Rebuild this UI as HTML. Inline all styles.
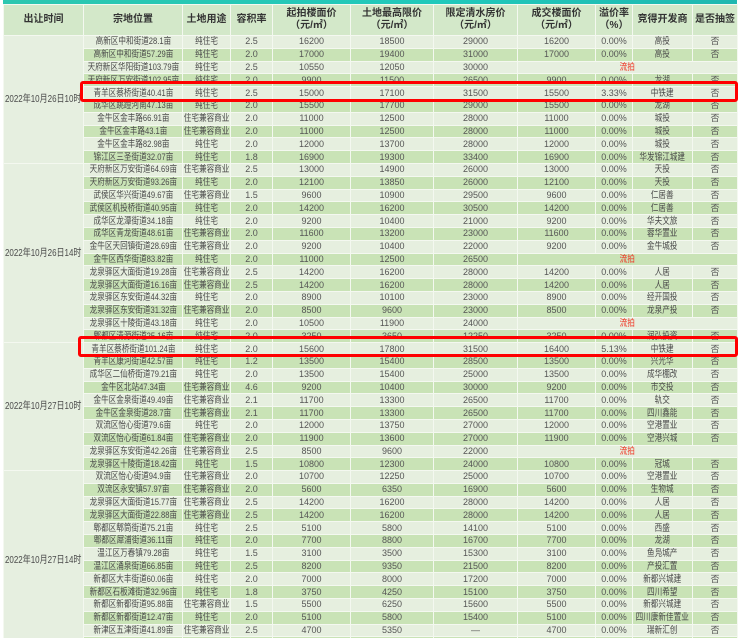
<!DOCTYPE html>
<html><head><meta charset="utf-8"><style>
html,body{margin:0;padding:0;background:#fff;width:740px;height:638px;overflow:hidden;position:relative}
.top{position:absolute;left:3px;top:0;width:734px;height:4px;background:linear-gradient(90deg,#2cc7b0,#20c9bb 60%,#1fb8b0)}
table{position:absolute;left:3px;top:4px;border-collapse:collapse;table-layout:fixed;width:734px;font-family:"Liberation Sans","Noto Sans CJK SC",sans-serif;color:#555;font-size:9px}
td,th{border:1px solid #f4f8f0;text-align:center;padding:0;white-space:nowrap;overflow:hidden;line-height:11px}
th{background:#d3e8c9;color:#333;font-weight:bold;font-size:10px;height:30px;line-height:12px}
tr.r{height:12.8px}
tr.l td{background:#e6efdf}
tr.d td{background:#c9e3b6}
td.dt{background:#e6efe0 !important;color:#444;font-size:10px}
td i{font-style:normal;display:block;width:160%;margin-left:-30%;transform:scaleX(.8);text-align:center;font-size:9.5px;color:#4a4a4a}
td.dt i{font-size:10px}
.red{color:#f03020}
td.red i{color:#f03020}
.box{position:absolute;border:3px solid #f00;border-radius:3px;box-sizing:border-box}
</style></head><body>
<div class="top"></div>
<table id="t">
<colgroup><col style="width:80px"><col style="width:99px"><col style="width:48px"><col style="width:42px"><col style="width:78px"><col style="width:83px"><col style="width:84px"><col style="width:78px"><col style="width:37px"><col style="width:60px"><col style="width:45px"></colgroup>
<tr><th>出让时间</th><th>宗地位置</th><th>土地用途</th><th>容积率</th><th>起拍楼面价<br>（元/㎡）</th><th>土地最高限价<br>（元/㎡）</th><th>限定清水房价<br>（元/㎡）</th><th>成交楼面价<br>（元/㎡）</th><th>溢价率<br>（%）</th><th>竞得开发商</th><th>是否抽签</th></tr>
<tr class="r l"><td class="dt" rowspan="10"><i>2022年10月26日10时</i></td><td><i>高新区中和街道28.1亩</i></td><td><i>纯住宅</i></td><td>2.5</td><td>16200</td><td>18500</td><td>29000</td><td>16200</td><td>0.00%</td><td><i>高投</i></td><td>否</td></tr>
<tr class="r d"><td><i>高新区中和街道57.29亩</i></td><td><i>纯住宅</i></td><td>2.0</td><td>17000</td><td>19400</td><td>31000</td><td>17000</td><td>0.00%</td><td><i>高投</i></td><td>否</td></tr>
<tr class="r l"><td><i>天府新区华阳街道103.79亩</i></td><td><i>纯住宅</i></td><td>2.5</td><td>10550</td><td>12050</td><td>30000</td><td colspan="4" class="red"><i>流拍</i></td></tr>
<tr class="r d"><td><i>天府新区万安街道102.95亩</i></td><td><i>纯住宅</i></td><td>2.0</td><td>9900</td><td>11500</td><td>26500</td><td>9900</td><td>0.00%</td><td><i>龙湖</i></td><td>否</td></tr>
<tr class="r l"><td><i>青羊区蔡桥街道40.41亩</i></td><td><i>纯住宅</i></td><td>2.5</td><td>15000</td><td>17100</td><td>31500</td><td>15500</td><td>3.33%</td><td><i>中铁建</i></td><td>否</td></tr>
<tr class="r d"><td><i>成华区跳蹬河南47.13亩</i></td><td><i>纯住宅</i></td><td>2.0</td><td>15500</td><td>17700</td><td>29000</td><td>15500</td><td>0.00%</td><td><i>龙湖</i></td><td>否</td></tr>
<tr class="r l"><td><i>金牛区金丰路66.91亩</i></td><td><i>住宅兼容商业</i></td><td>2.0</td><td>11000</td><td>12500</td><td>28000</td><td>11000</td><td>0.00%</td><td><i>城投</i></td><td>否</td></tr>
<tr class="r d"><td><i>金牛区金丰路43.1亩</i></td><td><i>住宅兼容商业</i></td><td>2.0</td><td>11000</td><td>12500</td><td>28000</td><td>11000</td><td>0.00%</td><td><i>城投</i></td><td>否</td></tr>
<tr class="r l"><td><i>金牛区金丰路82.98亩</i></td><td><i>纯住宅</i></td><td>2.0</td><td>12000</td><td>13700</td><td>28000</td><td>12000</td><td>0.00%</td><td><i>城投</i></td><td>否</td></tr>
<tr class="r d"><td><i>锦江区三圣街道32.07亩</i></td><td><i>纯住宅</i></td><td>1.8</td><td>16900</td><td>19300</td><td>33400</td><td>16900</td><td>0.00%</td><td><i>华发锦江城建</i></td><td>否</td></tr>
<tr class="r l"><td class="dt" rowspan="14"><i>2022年10月26日14时</i></td><td><i>天府新区万安街道64.69亩</i></td><td><i>住宅兼容商业</i></td><td>2.5</td><td>13000</td><td>14900</td><td>26000</td><td>13000</td><td>0.00%</td><td><i>天投</i></td><td>否</td></tr>
<tr class="r d"><td><i>天府新区万安街道93.26亩</i></td><td><i>纯住宅</i></td><td>2.0</td><td>12100</td><td>13850</td><td>26000</td><td>12100</td><td>0.00%</td><td><i>天投</i></td><td>否</td></tr>
<tr class="r l"><td><i>武侯区华兴街道49.67亩</i></td><td><i>住宅兼容商业</i></td><td>1.5</td><td>9600</td><td>10900</td><td>29500</td><td>9600</td><td>0.00%</td><td><i>仁居善</i></td><td>否</td></tr>
<tr class="r d"><td><i>武侯区机投桥街道40.95亩</i></td><td><i>纯住宅</i></td><td>2.0</td><td>14200</td><td>16200</td><td>30500</td><td>14200</td><td>0.00%</td><td><i>仁居善</i></td><td>否</td></tr>
<tr class="r l"><td><i>成华区龙潭街道34.18亩</i></td><td><i>纯住宅</i></td><td>2.0</td><td>9200</td><td>10400</td><td>21000</td><td>9200</td><td>0.00%</td><td><i>华夫文旅</i></td><td>否</td></tr>
<tr class="r d"><td><i>成华区青龙街道48.61亩</i></td><td><i>住宅兼容商业</i></td><td>2.0</td><td>11600</td><td>13200</td><td>23000</td><td>11600</td><td>0.00%</td><td><i>蓉华置业</i></td><td>否</td></tr>
<tr class="r l"><td><i>金牛区天回镇街道28.69亩</i></td><td><i>住宅兼容商业</i></td><td>2.0</td><td>9200</td><td>10400</td><td>22000</td><td>9200</td><td>0.00%</td><td><i>金牛城投</i></td><td>否</td></tr>
<tr class="r d"><td><i>金牛区西华街道83.82亩</i></td><td><i>纯住宅</i></td><td>2.0</td><td>11000</td><td>12500</td><td>26500</td><td colspan="4" class="red"><i>流拍</i></td></tr>
<tr class="r l"><td><i>龙泉驿区大面街道19.28亩</i></td><td><i>住宅兼容商业</i></td><td>2.5</td><td>14200</td><td>16200</td><td>28000</td><td>14200</td><td>0.00%</td><td><i>人居</i></td><td>否</td></tr>
<tr class="r d"><td><i>龙泉驿区大面街道16.16亩</i></td><td><i>住宅兼容商业</i></td><td>2.5</td><td>14200</td><td>16200</td><td>28000</td><td>14200</td><td>0.00%</td><td><i>人居</i></td><td>否</td></tr>
<tr class="r l"><td><i>龙泉驿区东安街道44.32亩</i></td><td><i>纯住宅</i></td><td>2.0</td><td>8900</td><td>10100</td><td>23000</td><td>8900</td><td>0.00%</td><td><i>经开国投</i></td><td>否</td></tr>
<tr class="r d"><td><i>龙泉驿区东安街道31.32亩</i></td><td><i>住宅兼容商业</i></td><td>2.0</td><td>8500</td><td>9600</td><td>23000</td><td>8500</td><td>0.00%</td><td><i>龙泉产投</i></td><td>否</td></tr>
<tr class="r l"><td><i>龙泉驿区十陵街道43.18亩</i></td><td><i>纯住宅</i></td><td>2.0</td><td>10500</td><td>11900</td><td>24000</td><td colspan="4" class="red"><i>流拍</i></td></tr>
<tr class="r d"><td><i>郫都区清源街道25.16亩</i></td><td><i>纯住宅</i></td><td>2.0</td><td>3250</td><td>3650</td><td>12250</td><td>3250</td><td>0.00%</td><td><i>润弘投资</i></td><td>否</td></tr>
<tr class="r l"><td class="dt" rowspan="10"><i>2022年10月27日10时</i></td><td><i>青羊区蔡桥街道101.24亩</i></td><td><i>纯住宅</i></td><td>2.0</td><td>15600</td><td>17800</td><td>31500</td><td>16400</td><td>5.13%</td><td><i>中铁建</i></td><td>否</td></tr>
<tr class="r d"><td><i>青羊区康河街道42.57亩</i></td><td><i>纯住宅</i></td><td>1.2</td><td>13500</td><td>15400</td><td>28500</td><td>13500</td><td>0.00%</td><td><i>兴光华</i></td><td>否</td></tr>
<tr class="r l"><td><i>成华区二仙桥街道79.21亩</i></td><td><i>纯住宅</i></td><td>2.0</td><td>13500</td><td>15400</td><td>25000</td><td>13500</td><td>0.00%</td><td><i>成华棚改</i></td><td>否</td></tr>
<tr class="r d"><td><i>金牛区北站47.34亩</i></td><td><i>住宅兼容商业</i></td><td>4.6</td><td>9200</td><td>10400</td><td>30000</td><td>9200</td><td>0.00%</td><td><i>市交投</i></td><td>否</td></tr>
<tr class="r l"><td><i>金牛区金泉街道49.49亩</i></td><td><i>住宅兼容商业</i></td><td>2.1</td><td>11700</td><td>13300</td><td>26500</td><td>11700</td><td>0.00%</td><td><i>轨交</i></td><td>否</td></tr>
<tr class="r d"><td><i>金牛区金泉街道28.7亩</i></td><td><i>住宅兼容商业</i></td><td>2.1</td><td>11700</td><td>13300</td><td>26500</td><td>11700</td><td>0.00%</td><td><i>四川鑫能</i></td><td>否</td></tr>
<tr class="r l"><td><i>双流区怡心街道79.6亩</i></td><td><i>纯住宅</i></td><td>2.0</td><td>12000</td><td>13750</td><td>27000</td><td>12000</td><td>0.00%</td><td><i>空港置业</i></td><td>否</td></tr>
<tr class="r d"><td><i>双流区怡心街道61.84亩</i></td><td><i>住宅兼容商业</i></td><td>2.0</td><td>11900</td><td>13600</td><td>27000</td><td>11900</td><td>0.00%</td><td><i>空港兴城</i></td><td>否</td></tr>
<tr class="r l"><td><i>龙泉驿区东安街道42.26亩</i></td><td><i>住宅兼容商业</i></td><td>2.5</td><td>8500</td><td>9600</td><td>22000</td><td colspan="4" class="red"><i>流拍</i></td></tr>
<tr class="r d"><td><i>龙泉驿区十陵街道18.42亩</i></td><td><i>纯住宅</i></td><td>1.5</td><td>10800</td><td>12300</td><td>24000</td><td>10800</td><td>0.00%</td><td><i>冠城</i></td><td>否</td></tr>
<tr class="r l"><td class="dt" rowspan="14"><i>2022年10月27日14时</i></td><td><i>双流区怡心街道94.9亩</i></td><td><i>住宅兼容商业</i></td><td>2.0</td><td>10700</td><td>12250</td><td>25000</td><td>10700</td><td>0.00%</td><td><i>空港置业</i></td><td>否</td></tr>
<tr class="r d"><td><i>双流区永安镇57.97亩</i></td><td><i>住宅兼容商业</i></td><td>2.0</td><td>5600</td><td>6350</td><td>16900</td><td>5600</td><td>0.00%</td><td><i>生物城</i></td><td>否</td></tr>
<tr class="r l"><td><i>龙泉驿区大面街道15.77亩</i></td><td><i>住宅兼容商业</i></td><td>2.5</td><td>14200</td><td>16200</td><td>28000</td><td>14200</td><td>0.00%</td><td><i>人居</i></td><td>否</td></tr>
<tr class="r d"><td><i>龙泉驿区大面街道22.88亩</i></td><td><i>住宅兼容商业</i></td><td>2.5</td><td>14200</td><td>16200</td><td>28000</td><td>14200</td><td>0.00%</td><td><i>人居</i></td><td>否</td></tr>
<tr class="r l"><td><i>郫都区郫筒街道75.21亩</i></td><td><i>纯住宅</i></td><td>2.5</td><td>5100</td><td>5800</td><td>14100</td><td>5100</td><td>0.00%</td><td><i>西盛</i></td><td>否</td></tr>
<tr class="r d"><td><i>郫都区犀浦街道36.11亩</i></td><td><i>纯住宅</i></td><td>2.0</td><td>7700</td><td>8800</td><td>16700</td><td>7700</td><td>0.00%</td><td><i>龙湖</i></td><td>否</td></tr>
<tr class="r l"><td><i>温江区万春镇79.28亩</i></td><td><i>纯住宅</i></td><td>1.5</td><td>3100</td><td>3500</td><td>15300</td><td>3100</td><td>0.00%</td><td><i>鱼凫城产</i></td><td>否</td></tr>
<tr class="r d"><td><i>温江区涌泉街道66.85亩</i></td><td><i>纯住宅</i></td><td>2.5</td><td>8200</td><td>9350</td><td>21500</td><td>8200</td><td>0.00%</td><td><i>产投汇置</i></td><td>否</td></tr>
<tr class="r l"><td><i>新都区大丰街道60.06亩</i></td><td><i>纯住宅</i></td><td>2.0</td><td>7000</td><td>8000</td><td>17200</td><td>7000</td><td>0.00%</td><td><i>新都兴城建</i></td><td>否</td></tr>
<tr class="r d"><td><i>新都区石板滩街道32.96亩</i></td><td><i>纯住宅</i></td><td>1.8</td><td>3750</td><td>4250</td><td>15100</td><td>3750</td><td>0.00%</td><td><i>四川希望</i></td><td>否</td></tr>
<tr class="r l"><td><i>新都区新都街道95.88亩</i></td><td><i>住宅兼容商业</i></td><td>1.5</td><td>5500</td><td>6250</td><td>15600</td><td>5500</td><td>0.00%</td><td><i>新都兴城建</i></td><td>否</td></tr>
<tr class="r d"><td><i>新都区新都街道12.47亩</i></td><td><i>纯住宅</i></td><td>2.0</td><td>5100</td><td>5800</td><td>15400</td><td>5100</td><td>0.00%</td><td><i>四川康新佳置业</i></td><td>否</td></tr>
<tr class="r l"><td><i>新津区五津街道41.89亩</i></td><td><i>住宅兼容商业</i></td><td>2.5</td><td>4700</td><td>5350</td><td>—</td><td>4700</td><td>0.00%</td><td><i>瑞新汇创</i></td><td>否</td></tr>
<tr class="r d"><td></td><td></td><td></td><td></td><td></td><td></td><td></td><td></td><td></td><td></td></tr>
</table>
<div class="box" style="left:80px;top:81px;width:658px;height:21px"></div>
<div class="box" style="left:78px;top:336px;width:660px;height:21px"></div>
</body></html>
